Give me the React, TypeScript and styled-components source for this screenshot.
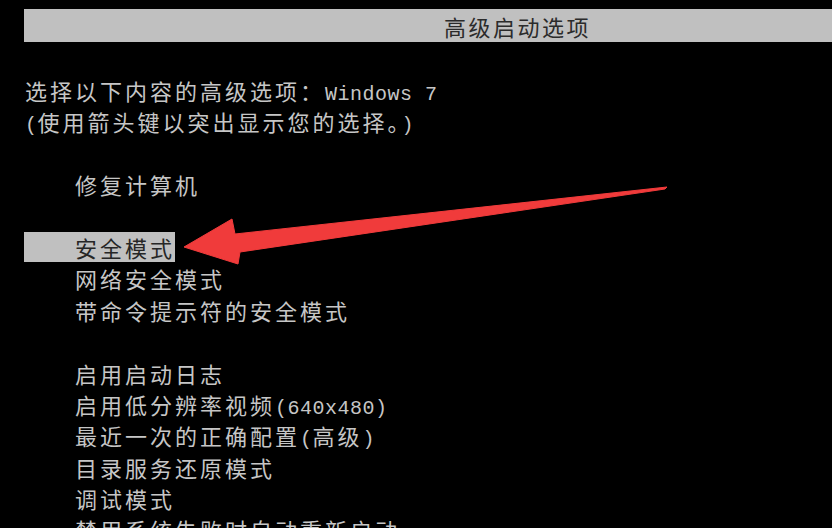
import React from "react";
import styled, { createGlobalStyle } from "styled-components";

const Global = createGlobalStyle`
  body {
    margin: 0;
    background: #000;
    overflow: hidden;
  }
`;

const LINE = 31.4;

const Screen = styled.div`
  position: relative;
  width: 832px;
  height: 528px;
  box-sizing: border-box;
  padding-top: 9px;
  overflow: hidden;
  background: #000;
  font-family: "Noto Sans CJK SC", "Liberation Mono", monospace;
`;

const TitleBar = styled.div`
  margin-left: 24px;
  width: 984px;
  height: 33px;
  display: flex;
  align-items: center;
  justify-content: center;
  padding-left: 3px;
  box-sizing: border-box;
  background: #c0c0c0;
  color: #2b2b2b;
  font-size: 22px;
  letter-spacing: 2.5px;
`;

const Content = styled.div`
  margin-top: 33px;
  padding-left: 25px;
  color: #c6c6c6;
  font-size: 22px;
  line-height: ${LINE}px;
  letter-spacing: 3px;
  white-space: nowrap;
`;

const Line = styled.div`
  height: ${LINE}px;
`;

const Latin = styled.span`
  font-family: "Liberation Mono", monospace;
  font-size: 20px;
  line-height: 1;
  letter-spacing: 0.5px;
`;

const Menu = styled.div`
  padding-left: 50px;
`;

const Group = styled.div`
  margin-top: ${LINE}px;
`;

const Item = styled.div<{ $selected?: boolean }>`
  height: ${LINE}px;
  ${({ $selected }) =>
    $selected
      ? `
    box-sizing: border-box;
    width: fit-content;
    height: 30px;
    margin: 0 0 1.4px -51px;
    padding-left: 51px;
    line-height: 31px;
    background: #c0c0c0;
    color: #262626;
  `
      : ""}
`;

const Overlay = styled.svg`
  position: absolute;
  left: 0;
  top: 0;
  pointer-events: none;
`;

const RedArrow: React.FC = () => (
  <Overlay width="832" height="528" viewBox="0 0 832 528">
    <polygon
      points="184,247 232,219 235,234 667,187 665,189 240,252 238,264"
      fill="#f03b3b"
      stroke="#f03b3b"
      strokeWidth="1"
      strokeLinejoin="round"
    />
  </Overlay>
);

export default function App() {
  return (
    <>
      <Global />
      <Screen>
        <TitleBar>高级启动选项</TitleBar>
        <Content>
          <Line>
            选择以下内容的高级选项：<Latin>Windows 7</Latin>
          </Line>
          <Line>
            <Latin>(</Latin>使用箭头键以突出显示您的选择。<Latin>)</Latin>
          </Line>
          <Menu>
            <Group>
              <Item>修复计算机</Item>
            </Group>
            <Group>
              <Item $selected>安全模式</Item>
              <Item>网络安全模式</Item>
              <Item>带命令提示符的安全模式</Item>
            </Group>
            <Group>
              <Item>启用启动日志</Item>
              <Item>
                启用低分辨率视频<Latin>(640x480)</Latin>
              </Item>
              <Item>
                最近一次的正确配置<Latin>(</Latin>高级<Latin>)</Latin>
              </Item>
              <Item>目录服务还原模式</Item>
              <Item>调试模式</Item>
              <Item>禁用系统失败时自动重新启动</Item>
            </Group>
          </Menu>
        </Content>
        <RedArrow />
      </Screen>
    </>
  );
}
